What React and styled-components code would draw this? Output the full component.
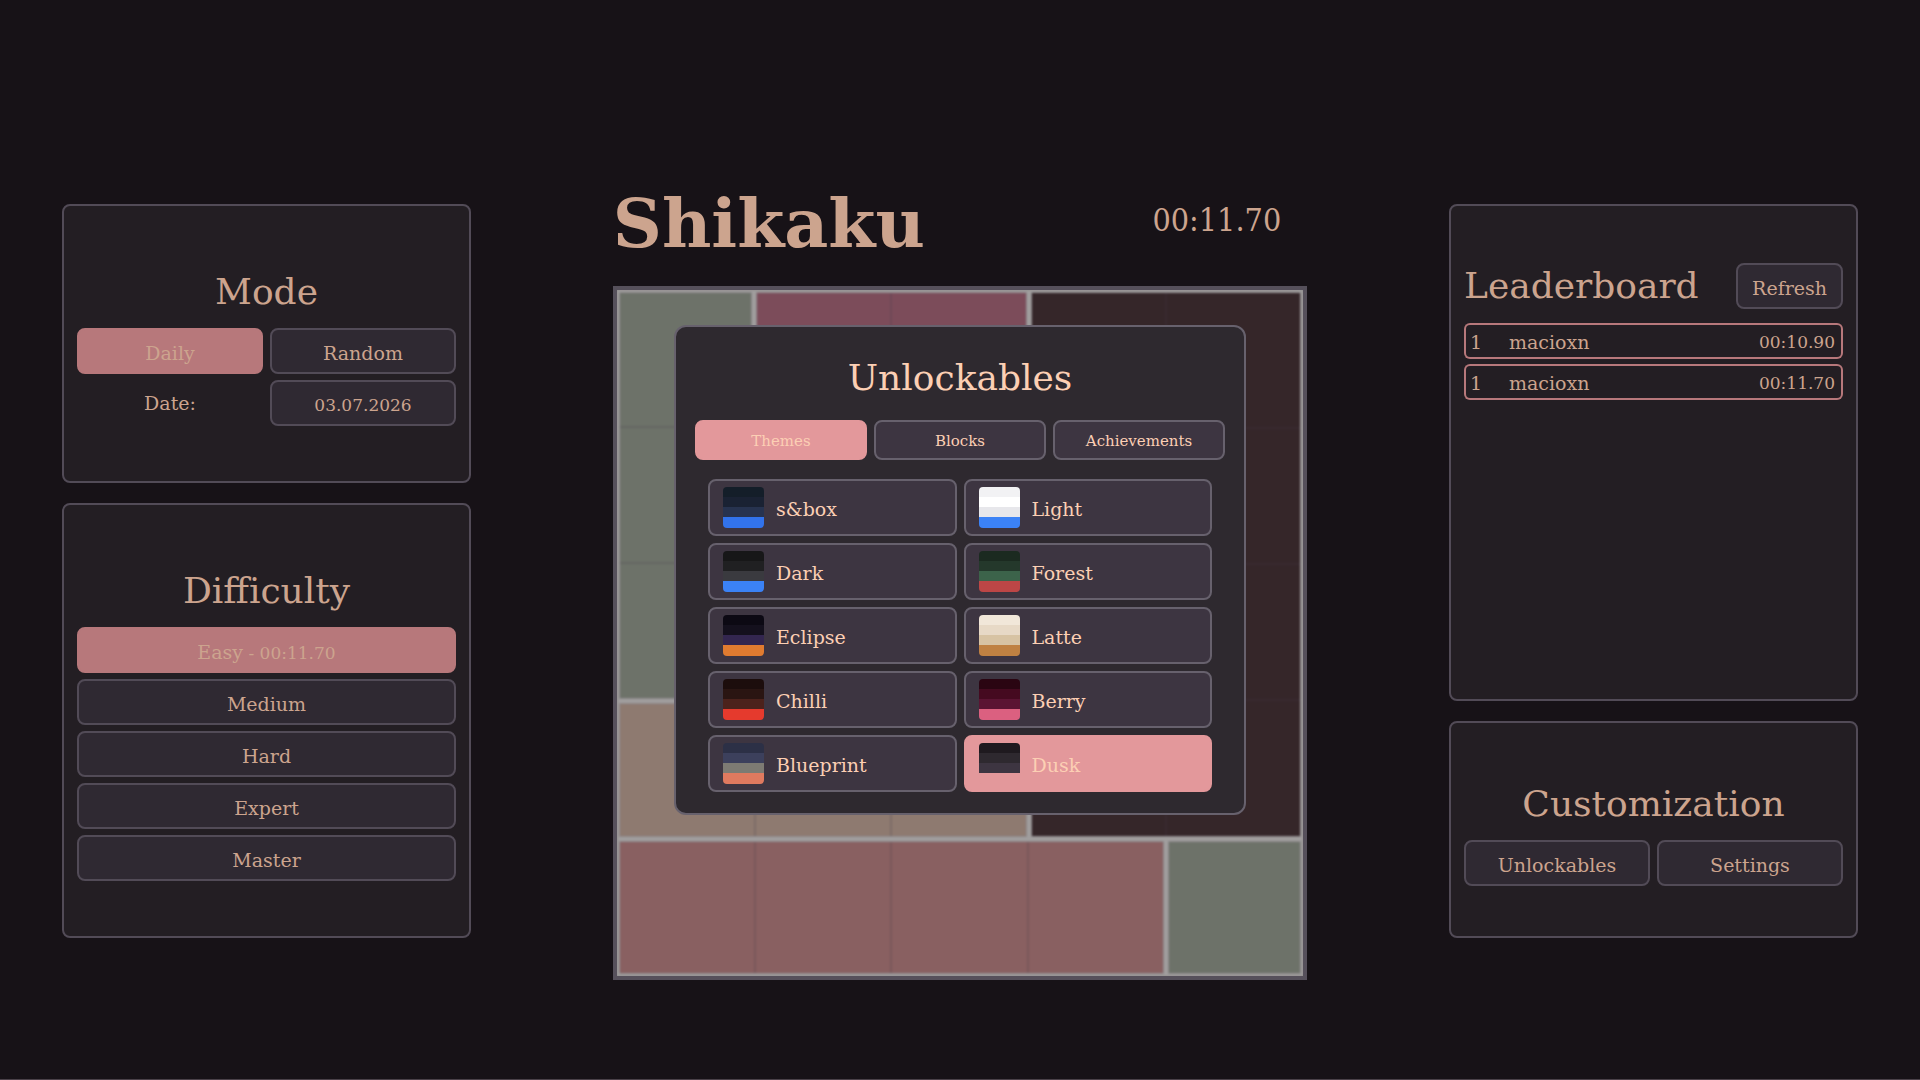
import { useState } from "react";
import styled, { createGlobalStyle } from "styled-components";

const GlobalStyle = createGlobalStyle`
  * {
    box-sizing: border-box;
  }
  body {
    margin: 0;
    background-color: #171217;
    font-family: "DejaVu Serif", serif;
    font-size: 19px;
    color: #cca48e;
  }
  button,
  input {
    font-family: inherit;
    font-size: inherit;
    color: inherit;
  }
`;

const Page = styled.main`
  position: relative;
  min-height: 100vh;
  padding: 62px 62px 0;
  border-bottom: 1px solid #4a4149;
  display: grid;
  grid-template-columns: 409fr 978fr 409fr;
  align-content: center;
`;

const Side = styled.div`
  margin: 44px 0;
  display: flex;
  flex-direction: column;
  gap: 20px;
`;

const Panel = styled.section`
  flex: ${({ $fill }) => ($fill ? "1 1 auto" : "0 0 auto")};
  padding: ${({ $pad }) => $pad || "55px"} 13px;
  border: 2px solid #524b57;
  border-radius: 8px;
  background-color: #231e23;
  display: flex;
  flex-direction: column;
  gap: 6px;
`;

const Heading = styled.h2`
  margin: 0;
  font-size: 36px;
  font-weight: 400;
  line-height: 61px;
  text-align: center;
`;

const Row = styled.div`
  display: grid;
  grid-template-columns: 1fr 1fr;
  align-items: center;
  gap: 7px;
`;

const Button = styled.button`
  height: 46px;
  padding: 4px 14px 0;
  border: 2px solid ${({ $active }) => ($active ? "#b7787b" : "#524b57")};
  border-radius: 8px;
  background-color: ${({ $active }) => ($active ? "#b7787b" : "#2f2932")};
  cursor: pointer;
`;

const BestTime = styled.span`
  font-size: 17px;
`;

const DateLabel = styled.label`
  text-align: center;
`;

const DateInput = styled.input`
  width: 100%;
  height: 46px;
  padding: 4px 14px 0;
  border: 2px solid #524b57;
  border-radius: 8px;
  background-color: #2f2932;
  font-size: 17px;
  text-align: center;
`;

const Game = styled.div`
  width: 71%;
  margin: 0 auto;
`;

const GameHeader = styled.div`
  display: flex;
  justify-content: space-between;
  align-items: center;
  height: 126px;
  padding-right: 26px;
`;

const Title = styled.h1`
  margin: 0;
  font-size: 68px;
  font-weight: 700;
  line-height: 80px;
`;

const Timer = styled.div`
  padding-bottom: 6px;
  font-family: "DejaVu Serif Condensed", "DejaVu Serif", serif;
  font-size: 32px;
`;

const Board = styled.div`
  aspect-ratio: 1;
  border: 4px solid #56505b;
  background-color: #8a8788;
  overflow: hidden;
`;

const Regions = styled.div`
  height: 100%;
  display: grid;
  grid-template-columns: repeat(5, 1fr);
  grid-template-rows: repeat(5, 1fr);
  filter: blur(1px);
`;

const Region = styled.div`
  grid-area: ${({ $area }) => $area};
  border: 3px solid #a19e9e;
  background-color: ${({ $color }) => $color};
  display: grid;
  grid-template-columns: repeat(${({ $cols }) => $cols}, 1fr);
  grid-template-rows: repeat(${({ $rows }) => $rows}, 1fr);
  gap: 2px;
`;

const Cell = styled.div`
  outline: 1px solid rgba(70, 60, 75, 0.22);
`;

const LeaderboardHead = styled.div`
  display: flex;
  justify-content: space-between;
  align-items: center;
  height: 46px;
  margin-bottom: 3px;
`;

const Scores = styled.table`
  width: 100%;
  border-collapse: separate;
  border-spacing: 0 5px;

  td {
    height: 36px;
    padding: 3px 0 0;
    border: 2px solid #b7787b;
    border-width: 2px 0;
  }
  td:first-child {
    width: 45px;
    padding-left: 4px;
    border-left-width: 2px;
    border-radius: 6px 0 0 6px;
  }
  td:last-child {
    padding-right: 6px;
    border-right-width: 2px;
    border-radius: 0 6px 6px 0;
    font-size: 17px;
    text-align: right;
  }
`;

const Overlay = styled.div`
  position: absolute;
  inset: 60px 0 0;
  display: flex;
  justify-content: center;
  align-items: center;
`;

const Modal = styled.div`
  width: 572px;
  max-width: 100%;
  padding: 20px 19px;
  border: 2px solid #67616d;
  border-radius: 12px;
  background-color: #2e292f;
  color: #fccfb4;
`;

const ModalTitle = styled(Heading)`
  margin-bottom: 12px;
`;

const Tabs = styled.div`
  display: grid;
  grid-template-columns: repeat(3, 1fr);
  gap: 7px;
`;

const Tab = styled.button`
  height: 40px;
  padding: 2px 0 0;
  border: 2px solid ${({ $active }) => ($active ? "#e3989b" : "#67616d")};
  border-radius: 8px;
  background-color: ${({ $active }) => ($active ? "#e3989b" : "#3d3541")};
  font-size: 15px;
  cursor: pointer;
`;

const ThemeGrid = styled.div`
  display: grid;
  grid-template-columns: 1fr 1fr;
  gap: 7px;
  padding: 19px 13px 1px;
`;

const ThemeCard = styled.button`
  display: flex;
  align-items: center;
  gap: 12px;
  height: 57px;
  padding: 0 13px;
  border: 2px solid ${({ $active }) => ($active ? "#e3989b" : "#67616d")};
  border-radius: 8px;
  background-color: ${({ $active }) => ($active ? "#e3989b" : "#3d3541")};
  cursor: pointer;
`;

const Swatch = styled.span`
  width: 41px;
  height: 41px;
  border-radius: 4px;
  overflow: hidden;
  display: flex;
  flex-direction: column;
`;

const Stripe = styled.span`
  flex: 1;
  background-color: ${({ $color }) => $color};
`;

const ThemeName = styled.span`
  padding-top: 3px;
`;

const levels = [
  { name: "Easy", best: "00:11.70" },
  { name: "Medium" },
  { name: "Hard" },
  { name: "Expert" },
  { name: "Master" },
];

const scores = [
  { rank: 1, name: "macioxn", time: "00:10.90" },
  { rank: 1, name: "macioxn", time: "00:11.70" },
];

// area is row start / column start / row end / column end
const regions = [
  { area: "1 / 1 / 4 / 2", cols: 1, rows: 3, color: "#6d7269" },
  { area: "1 / 2 / 4 / 4", cols: 2, rows: 3, color: "#7c4c5a" },
  { area: "1 / 4 / 5 / 6", cols: 2, rows: 4, color: "#352629" },
  { area: "4 / 1 / 5 / 4", cols: 3, rows: 1, color: "#8e7a70" },
  { area: "5 / 1 / 6 / 5", cols: 4, rows: 1, color: "#896061" },
  { area: "5 / 5 / 6 / 6", cols: 1, rows: 1, color: "#6d7269" },
];

const themes = [
  { name: "s&box", colors: ["#141e29", "#1a2233", "#27334f", "#3273eb"] },
  { name: "Light", colors: ["#f2f2f4", "#ffffff", "#e7e7eb", "#3b82f6"] },
  { name: "Dark", colors: ["#171718", "#202022", "#3a3a3f", "#3b82f6"] },
  { name: "Forest", colors: ["#1b2a20", "#24382b", "#3c634a", "#bd4646"] },
  { name: "Eclipse", colors: ["#0c0913", "#14101d", "#33264f", "#e07b30"] },
  { name: "Latte", colors: ["#f1e7d9", "#e7d9c6", "#d7c3a3", "#bf8142"] },
  { name: "Chilli", colors: ["#1c0d0c", "#2a1512", "#4c221c", "#e53a2d"] },
  { name: "Berry", colors: ["#2a0512", "#450a20", "#5b1433", "#db6080"] },
  { name: "Blueprint", colors: ["#2c3046", "#3c405c", "#7d7b73", "#e07a5f"] },
  { name: "Dusk", colors: ["#1f1a1f", "#2e292f", "#3d3541", "#e3989b"] },
];

const tabs = ["Themes", "Blocks", "Achievements"];

const App = () => {
  const [mode, setMode] = useState("Daily");
  const [date, setDate] = useState("03.07.2026");
  const [level, setLevel] = useState("Easy");
  const [tab, setTab] = useState("Themes");
  const [theme, setTheme] = useState("Dusk");

  return (
    <Page>
      <GlobalStyle />
      <Side>
        <Panel>
          <Heading>Mode</Heading>
          <Row>
            {["Daily", "Random"].map((m) => (
              <Button key={m} $active={m === mode} onClick={() => setMode(m)}>
                {m}
              </Button>
            ))}
          </Row>
          <Row>
            <DateLabel htmlFor="date">Date:</DateLabel>
            <DateInput
              id="date"
              value={date}
              onChange={(e) => setDate(e.target.value)}
            />
          </Row>
        </Panel>
        <Panel $fill>
          <Heading>Difficulty</Heading>
          {levels.map((l) => (
            <Button
              key={l.name}
              $active={l.name === level}
              onClick={() => setLevel(l.name)}
            >
              {l.name}
              {l.best && <BestTime> - {l.best}</BestTime>}
            </Button>
          ))}
        </Panel>
      </Side>

      <Game>
        <GameHeader>
          <Title>Shikaku</Title>
          <Timer>00:11.70</Timer>
        </GameHeader>
        <Board>
          <Regions>
            {regions.map((r) => (
              <Region
                key={r.area}
                $area={r.area}
                $color={r.color}
                $cols={r.cols}
                $rows={r.rows}
              >
                {Array.from({ length: r.cols * r.rows }, (_, i) => (
                  <Cell key={i} />
                ))}
              </Region>
            ))}
          </Regions>
        </Board>
      </Game>

      <Side>
        <Panel $fill $pad="57px">
          <LeaderboardHead>
            <Heading>Leaderboard</Heading>
            <Button>Refresh</Button>
          </LeaderboardHead>
          <Scores>
            <tbody>
              {scores.map((s) => (
                <tr key={s.time}>
                  <td>{s.rank}</td>
                  <td>{s.name}</td>
                  <td>{s.time}</td>
                </tr>
              ))}
            </tbody>
          </Scores>
        </Panel>
        <Panel $pad="50px">
          <Heading>Customization</Heading>
          <Row>
            <Button>Unlockables</Button>
            <Button>Settings</Button>
          </Row>
        </Panel>
      </Side>

      <Overlay>
        <Modal role="dialog" aria-labelledby="unlockables">
          <ModalTitle id="unlockables">Unlockables</ModalTitle>
          <Tabs>
            {tabs.map((t) => (
              <Tab key={t} $active={t === tab} onClick={() => setTab(t)}>
                {t}
              </Tab>
            ))}
          </Tabs>
          <ThemeGrid>
            {themes.map((t) => (
              <ThemeCard
                key={t.name}
                $active={t.name === theme}
                onClick={() => setTheme(t.name)}
              >
                <Swatch>
                  {t.colors.map((c) => (
                    <Stripe key={c} $color={c} />
                  ))}
                </Swatch>
                <ThemeName>{t.name}</ThemeName>
              </ThemeCard>
            ))}
          </ThemeGrid>
        </Modal>
      </Overlay>
    </Page>
  );
};

export default App;
